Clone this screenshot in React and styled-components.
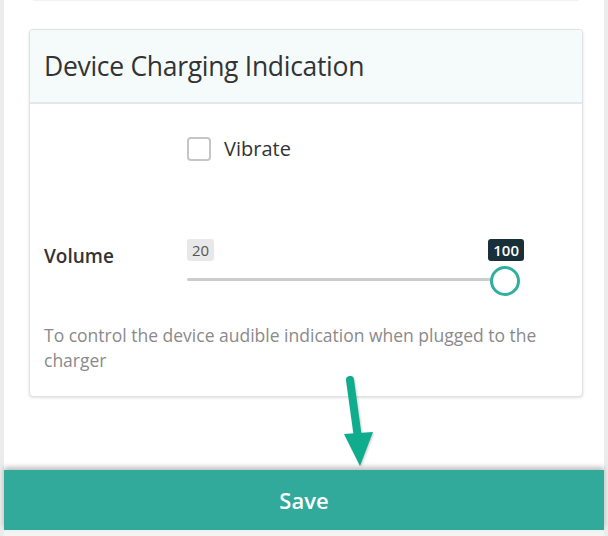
import React from "react";
import styled, { createGlobalStyle } from "styled-components";

const GlobalStyle = createGlobalStyle`
  html, body {
    margin: 0;
    padding: 0;
    background: #ffffff;
  }
  body {
    font-family: "Open Sans", "Noto Sans", sans-serif;
  }
`;

function App() {
  return (
    <>
      <GlobalStyle />
      <Page>
        <Content>
          <PrevCardEdge />
          <Card>
            <CardHeader>
              <h2>Device Charging Indication</h2>
            </CardHeader>
            <CardBody>
              <CheckRow>
                <Checkbox />
                <span>Vibrate</span>
              </CheckRow>
              <FieldRow>
                <FieldLabel>Volume</FieldLabel>
                <Slider>
                  <Bubble $dark={false} style={{ left: 0 }}>20</Bubble>
                  <Bubble $dark style={{ right: 0 }}>100</Bubble>
                  <Track />
                  <Thumb />
                </Slider>
              </FieldRow>
              <Hint>
                To control the device audible indication when plugged to the
                charger
              </Hint>
            </CardBody>
          </Card>
          <Arrow width="40" height="92" viewBox="0 0 40 92">
            <path
              d="M8 4 L16 62"
              stroke="#0fac8e"
              strokeWidth="8"
              strokeLinecap="round"
              fill="none"
            />
            <path d="M2 58 L31 56 L18 90 Z" fill="#0fac8e" />
          </Arrow>
        </Content>
        <SaveBar>Save</SaveBar>
        <BottomGap />
      </Page>
    </>
  );
}

export default App;

const Page = styled.div`
  height: 536px;
  width: 608px;
  box-sizing: border-box;
  display: flex;
  flex-direction: column;
  background: #fff;
  border-left: 4px solid #ececec;
  border-right: 4px solid #ececec;
`;

const Content = styled.div`
  flex: 1;
  position: relative;
  padding: 0 21px 0 25px;
  box-sizing: border-box;
`;

const PrevCardEdge = styled.div`
  height: 1px;
  margin: 0 4px;
  background: #f2f2f2;
`;

const Card = styled.div`
  margin-top: 28px;
  border: 1px solid #e2e2e2;
  border-radius: 4px;
  box-shadow: 0 1px 3px rgba(0, 0, 0, 0.12);
  background: #fff;
`;

const CardHeader = styled.div`
  height: 72px;
  background: #f5fbfb;
  border-bottom: 2px solid #e4e8e8;
  border-radius: 4px 4px 0 0;
  display: flex;
  align-items: center;
  padding: 0 14px;
  h2 {
    margin: 0;
    font-size: 26.5px;
    font-weight: 400;
    color: #333;
    letter-spacing: -0.3px;
  }
`;

const CardBody = styled.div`
  padding: 31px 14px 23px;
`;

const CheckRow = styled.label`
  display: flex;
  align-items: center;
  gap: 13px;
  margin-left: 143px;
  font-size: 20px;
  color: #333;
`;

const Checkbox = styled.span`
  width: 20px;
  height: 20px;
  border: 2px solid #c6c6c6;
  border-radius: 4px;
`;

const FieldRow = styled.div`
  display: flex;
  align-items: flex-start;
  margin-top: 77px;
`;

const FieldLabel = styled.div`
  width: 143px;
  font-size: 19px;
  font-weight: 600;
  color: #333;
  padding-top: 4px;
`;

const Slider = styled.div`
  position: relative;
  width: 337px;
  height: 56px;
`;

const Bubble = styled.span`
  position: absolute;
  top: 0;
  padding: 1px 5px;
  border-radius: 3px;
  font-size: 15px;
  line-height: 20px;
  font-weight: ${(p) => (p.$dark ? 600 : 400)};
  background: ${(p) => (p.$dark ? "#19303a" : "#e8e8e8")};
  color: ${(p) => (p.$dark ? "#fff" : "#555")};
`;

const Track = styled.div`
  position: absolute;
  left: 0;
  right: 16px;
  top: 39px;
  height: 3px;
  background: #cccccc;
  border-radius: 2px;
`;

const Thumb = styled.div`
  position: absolute;
  right: 4px;
  top: 27px;
  width: 24px;
  height: 24px;
  border: 3px solid #2fb09e;
  border-radius: 50%;
  background: #fff;
`;

const Hint = styled.p`
  margin: 28px 0 0;
  max-width: 508px;
  font-size: 17.5px;
  line-height: 25px;
  color: #8a8a8a;
`;

const Arrow = styled.svg`
  position: absolute;
  left: 338px;
  top: 376px;
  filter: drop-shadow(1px 1px 1px rgba(0, 0, 0, 0.2));
`;

const SaveBar = styled.button`
  height: 60px;
  width: 100%;
  border: none;
  margin: 0;
  background: #31a99b;
  color: #fff;
  font-family: "Open Sans", "Noto Sans", sans-serif;
  font-size: 22px;
  font-weight: 600;
  box-shadow: 0 -3px 5px rgba(0, 0, 0, 0.25);
  position: relative;
  cursor: pointer;
`;

const BottomGap = styled.div`
  height: 6px;
  background: #f4f4f4;
`;
